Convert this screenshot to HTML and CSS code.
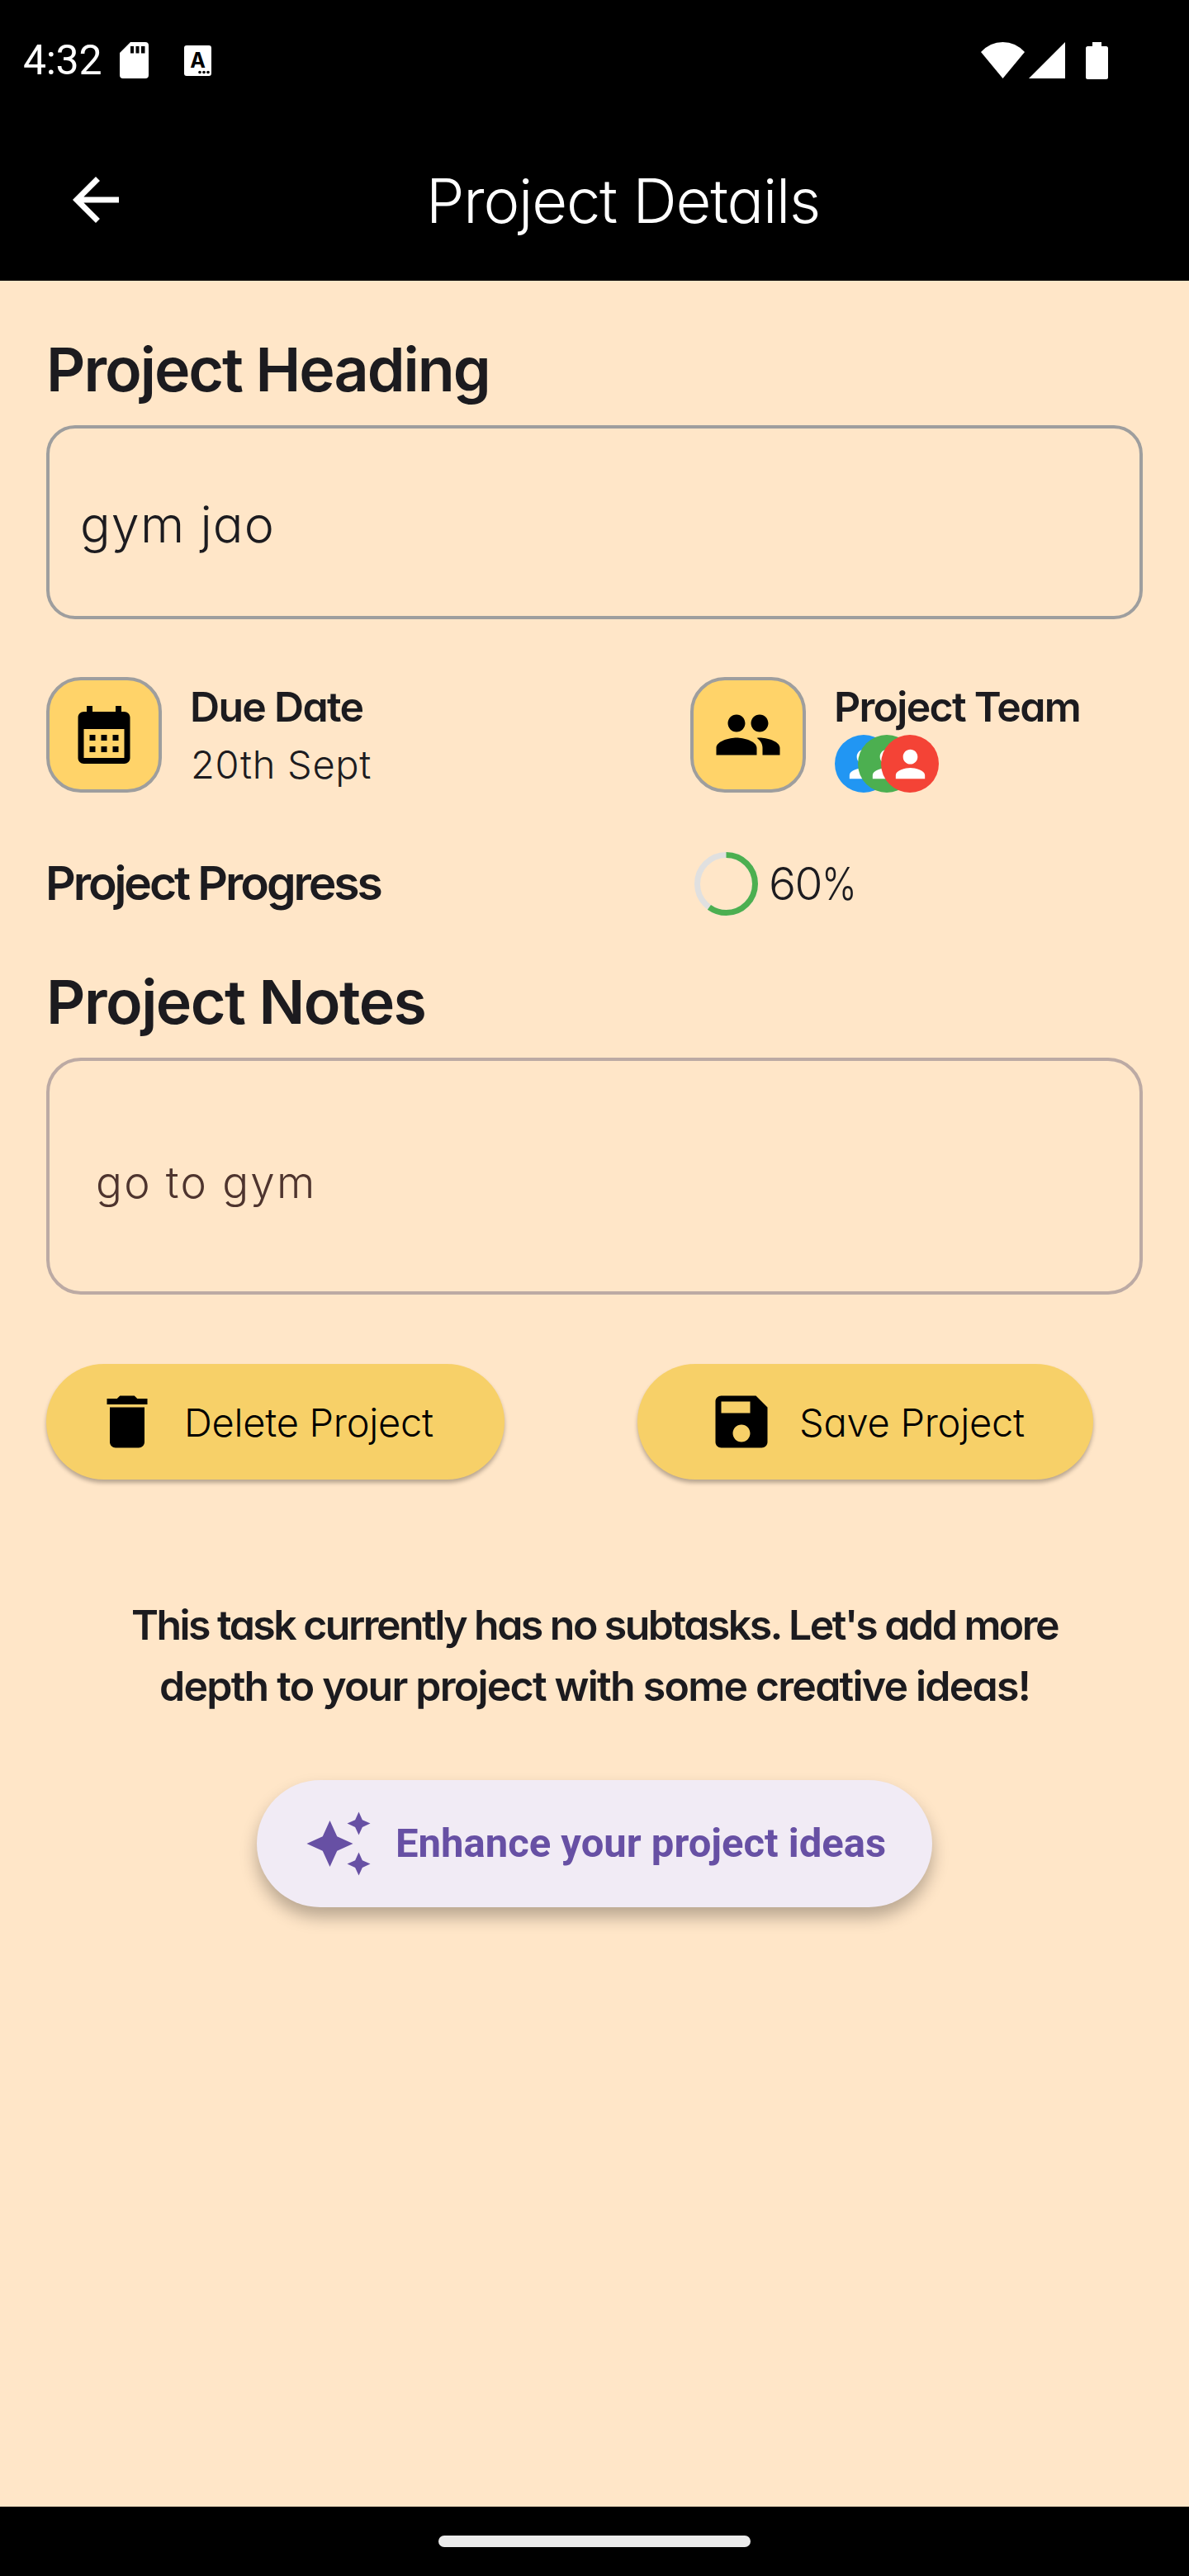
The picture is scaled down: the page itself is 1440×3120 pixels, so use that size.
FILE: index.html
```html
<!DOCTYPE html>
<html lang="en">
<head>
<meta charset="utf-8">
<title>Project Details</title>
<link rel="stylesheet" href="styles.css">
</head>
<body>
<header class="top">
  <div class="status">
    <span class="clock">4:32</span>
    <svg class="sd" viewBox="0 0 35 44"><path fill="#fff" fill-rule="evenodd" d="M13 0H31a4 4 0 0 1 4 4V40a4 4 0 0 1-4 4H4a4 4 0 0 1-4-4V13ZM13 5v8.500h4V5ZM19.500 5v8.500h4V5ZM26 5v8.500h4.500V5Z"/></svg>
    <svg class="kb" viewBox="0 0 33 37"><rect width="33" height="37" rx="3" fill="#fff"/><text class="kb-letter" x="16.500" y="26.500" text-anchor="middle">A</text><circle cx="19" cy="32.500" r="1.800"/><circle cx="24" cy="32.500" r="1.800"/><circle cx="29" cy="32.500" r="1.800"/></svg>
    <span class="spacer"></span>
    <svg class="wifi" viewBox="0 0 53 44"><path fill="#fff" d="M0 12Q11 0 26.500 0T53 12L26.500 44Z"/></svg>
    <svg class="signal" viewBox="0 0 44 44"><path fill="#fff" d="M44 0V44H0Z"/></svg>
    <svg class="battery" viewBox="0 0 27 45"><path fill="#fff" d="M8 0H19V5H24.500A2.500 2.500 0 0 1 27 7.500V42.500A2.500 2.500 0 0 1 24.500 45H2.500A2.500 2.500 0 0 1 0 42.500V7.500A2.500 2.500 0 0 1 2.500 5H8Z"/></svg>
  </div>
  <div class="appbar">
    <svg class="icon" viewBox="0 0 24 24"><path fill="#fff" d="M20 11H7.830l5.590-5.590L12 4l-8 8 8 8 1.410-1.410L7.830 13H20v-2z"/></svg>
    <h1 class="title">Project Details</h1>
  </div>
</header>
<main class="content">
  <h2 class="section">Project Heading</h2>
  <div class="field field-name"><span>gym jao</span></div>
  <div class="meta">
    <div class="meta-item">
      <div class="tile"><svg class="icon" viewBox="0 0 24 24"><path d="M19 4h-1V2h-2v2H8V2H6v2H5c-1.110 0-1.990.9-1.990 2L3 20c0 1.100.890 2 2 2h14c1.100 0 2-.9 2-2V6c0-1.100-.9-2-2-2zm0 16H5V10h14v10zM9 14H7v-2h2v2zm4 0h-2v-2h2v2zm4 0h-2v-2h2v2zm-8 4H7v-2h2v2zm4 0h-2v-2h2v2zm4 0h-2v-2h2v2z"/></svg></div>
      <div class="meta-text"><span class="label">Due Date</span><span class="value">20th Sept</span></div>
    </div>
    <div class="meta-item">
      <div class="tile"><svg class="icon" viewBox="0 0 24 24"><path d="M16 11c1.660 0 2.990-1.340 2.990-3S17.660 5 16 5s-3 1.340-3 3 1.340 3 3 3zm-8 0c1.660 0 2.990-1.340 2.990-3S9.660 5 8 5 5 6.340 5 8s1.340 3 3 3zm0 2c-2.330 0-7 1.170-7 3.500V19h14v-2.500c0-2.330-4.670-3.500-7-3.500zm8 0c-.29 0-.62.020-.97.050 1.160.84 1.970 1.970 1.970 3.450V19h6v-2.500c0-2.330-4.670-3.500-7-3.500z"/></svg></div>
      <div class="meta-text"><span class="label">Project Team</span>
        <div class="avatars">
          <span class="avatar blue"><svg viewBox="0 0 24 24"><path d="M12 12c2.210 0 4-1.790 4-4s-1.790-4-4-4-4 1.790-4 4 1.790 4 4 4zm0 2c-2.670 0-8 1.340-8 4v2h16v-2c0-2.660-5.330-4-8-4z"/></svg></span>
          <span class="avatar green"><svg viewBox="0 0 24 24"><path d="M12 12c2.210 0 4-1.790 4-4s-1.790-4-4-4-4 1.790-4 4 1.790 4 4 4zm0 2c-2.670 0-8 1.340-8 4v2h16v-2c0-2.660-5.330-4-8-4z"/></svg></span>
          <span class="avatar red"><svg viewBox="0 0 24 24"><path d="M12 12c2.210 0 4-1.790 4-4s-1.790-4-4-4-4 1.790-4 4 1.790 4 4 4zm0 2c-2.670 0-8 1.340-8 4v2h16v-2c0-2.660-5.330-4-8-4z"/></svg></span>
        </div>
      </div>
    </div>
  </div>
  <div class="progress">
    <span class="progress-label">Project Progress</span>
    <div class="progress-value">
      <svg class="ring" viewBox="0 0 77 77"><circle cx="38.500" cy="38.500" r="35" stroke="#e0e0e0"/><circle cx="38.500" cy="38.500" r="35" stroke="#4caf50" pathLength="100" stroke-dasharray="60 40" transform="rotate(-90 38.500 38.500)"/></svg>
      <span class="percent">60<span class="unit">%</span></span>
    </div>
  </div>
  <h2 class="section notes">Project Notes</h2>
  <div class="field field-notes"><span>go to gym</span></div>
  <div class="actions">
    <button class="action"><svg class="icon" viewBox="0 0 24 24"><path d="M6 19c0 1.100.9 2 2 2h8c1.100 0 2-.9 2-2V7H6v12zM19 4h-3.500l-1-1h-5l-1 1H5v2h14V4z"/></svg><span>Delete Project</span></button>
    <button class="action save"><svg class="icon" viewBox="0 0 24 24"><path d="M17 3H5c-1.110 0-2 .9-2 2v14c0 1.100.890 2 2 2h14c1.100 0 2-.9 2-2V7l-4-4zm-5 16c-1.660 0-3-1.340-3-3s1.340-3 3-3 3 1.340 3 3-1.340 3-3 3zm3-10H5V5h10v4z"/></svg><span>Save Project</span></button>
  </div>
  <p class="hint"><span class="hint-first">This task currently has no subtasks. Let's add more</span><br><span class="hint-second">depth to your project with some creative ideas!</span></p>
  <button class="enhance"><svg class="icon" viewBox="0 0 24 24"><path d="M19 9l1.250-2.750L23 5l-2.750-1.250L19 1l-1.250 2.750L15 5l2.750 1.250L19 9zm-7.500.500L9 4 6.500 9.500 1 12l5.500 2.500L9 20l2.500-5.500L17 12l-5.500-2.500zM19 15l-1.250 2.750L15 19l2.750 1.250L19 23l1.250-2.750L23 19l-2.750-1.250L19 15z"/></svg><span>Enhance your project ideas</span></button>
</main>
<footer class="navbar"><span class="pill"></span></footer>
</body>
</html>
```
FILE: styles.css
```css
* { box-sizing: border-box; }
body { margin: 0; width: 1440px; height: 3120px; background: #ffe6c8; color: #1c1b1f; font-family: Inter, "Liberation Sans", sans-serif; font-feature-settings: "cv11"; display: flex; flex-direction: column; overflow: hidden; }
h1, h2, p { margin: 0; }
svg { display: block; flex: none; }
span { white-space: nowrap; }
button { border: 0; padding: 0; font-family: inherit; font-feature-settings: inherit; }
.icon { width: 84px; height: 84px; }

.top { height: 340px; background: #000; color: #fff; flex: none; }
.status { height: 146px; padding: 0 98px 0 28px; display: flex; align-items: center; }
.clock { font: 400 50px/60px Roboto, sans-serif; width: 117px; letter-spacing: -.3px; }
.sd { width: 35px; height: 44px; }
.kb { width: 33px; height: 37px; margin-left: 43px; }
.kb-letter { font: 700 25px Inter, sans-serif; }
.spacer { flex: 1; }
.wifi { width: 53px; height: 44px; }
.signal { width: 44px; height: 44px; margin-left: 5px; }
.battery { width: 27px; height: 45px; margin-left: 25px; }
.appbar { height: 192px; padding: 0 74px; display: flex; align-items: center; }
.title { font-size: 74px; font-weight: 330; line-height: 90px; margin: 2px 0 0 358px; letter-spacing: -1.2px; }

.content { padding: 0 56px; flex: 1; }
.section { font-size: 73.5px; font-weight: 600; line-height: 80px; margin-top: 68px; font-feature-settings: normal; letter-spacing: -2.02px; }
.section.notes { margin-top: 64px; letter-spacing: -1.53px; }
.field { margin-top: 27px; border: 4px solid #9e9e9e; border-radius: 35px; display: flex; align-items: center; font-weight: 320; }
.field-name { height: 235px; font-size: 61px; padding: 4px 0 0 37px; letter-spacing: 1.1px; }
.field-notes { height: 287px; border-color: #bcaaa4; border-radius: 42px; color: #4e342e; font-size: 53px; padding: 14px 0 0 56px; letter-spacing: 2.2px; }

.meta { margin-top: 70px; height: 140px; display: grid; grid-template-columns: 780px 1fr; }
.meta-item { display: flex; gap: 35px; }
.tile { width: 140px; height: 140px; border: 4px solid #9e9e9e; border-radius: 42px; background: #ffd369; display: flex; align-items: center; justify-content: center; flex: none; }
.meta-text { display: flex; flex-direction: column; align-items: flex-start; }
.label { font-size: 50px; font-weight: 560; line-height: 72px; height: 70px; letter-spacing: -1.7px; margin-left: -1px; }
.value { font-size: 47px; font-weight: 300; line-height: 72px; letter-spacing: .7px; }
.avatars { display: flex; }
.avatar { width: 70px; height: 70px; border-radius: 50%; display: flex; align-items: center; justify-content: center; margin-right: -42px; }
.avatar svg { width: 53px; height: 53px; fill: #fff; }
.blue { background: #2196f3; }
.green { background: #4caf50; }
.red { background: #f44336; }

.progress { margin-top: 70px; height: 80px; display: grid; grid-template-columns: 785px 1fr; align-items: center; }
.progress-label { font-size: 57px; font-weight: 560; line-height: 80px; letter-spacing: -3.1px; margin-left: -1px; }
.progress-value { display: flex; align-items: center; gap: 13px; }
.ring { width: 77px; height: 77px; fill: none; stroke-width: 7px; }
.percent { font-size: 55px; font-weight: 300; line-height: 80px; letter-spacing: -1.5px; }
.unit { display: inline-block; transform: scaleX(.83); transform-origin: left; }

.actions { margin-top: 84px; display: flex; gap: 161px; }
.action { width: 555px; height: 140px; border-radius: 70px; background: #f7d068; color: #000; font-size: 47px; font-weight: 300; display: flex; align-items: center; gap: 27px; padding-left: 56px; box-shadow: 0 4px 5px rgba(0,0,0,.28); letter-spacing: -.25px; }
.action.save { width: 552px; padding-left: 84px; gap: 28px; }

.hint { margin-top: 139px; font-size: 50px; font-weight: 560; line-height: 74px; text-align: center; }
.hint-first { letter-spacing: -2.54px; }
.hint-second { letter-spacing: -1.77px; }
.enhance { display: flex; align-items: center; width: 818px; height: 154px; margin: 77px auto 0; border-radius: 77px; background: #f1ebf5; color: #6750a4; font: 700 49px/60px Roboto, sans-serif; padding-left: 57px; gap: 27px; box-shadow: 0 12px 20px rgba(0,0,0,.28); }
.enhance .icon { fill: #6750a4; }

.navbar { height: 84px; background: #000; flex: none; display: flex; align-items: center; justify-content: center; }
.pill { width: 378px; height: 14px; border-radius: 7px; background: #ebebeb; }
```
